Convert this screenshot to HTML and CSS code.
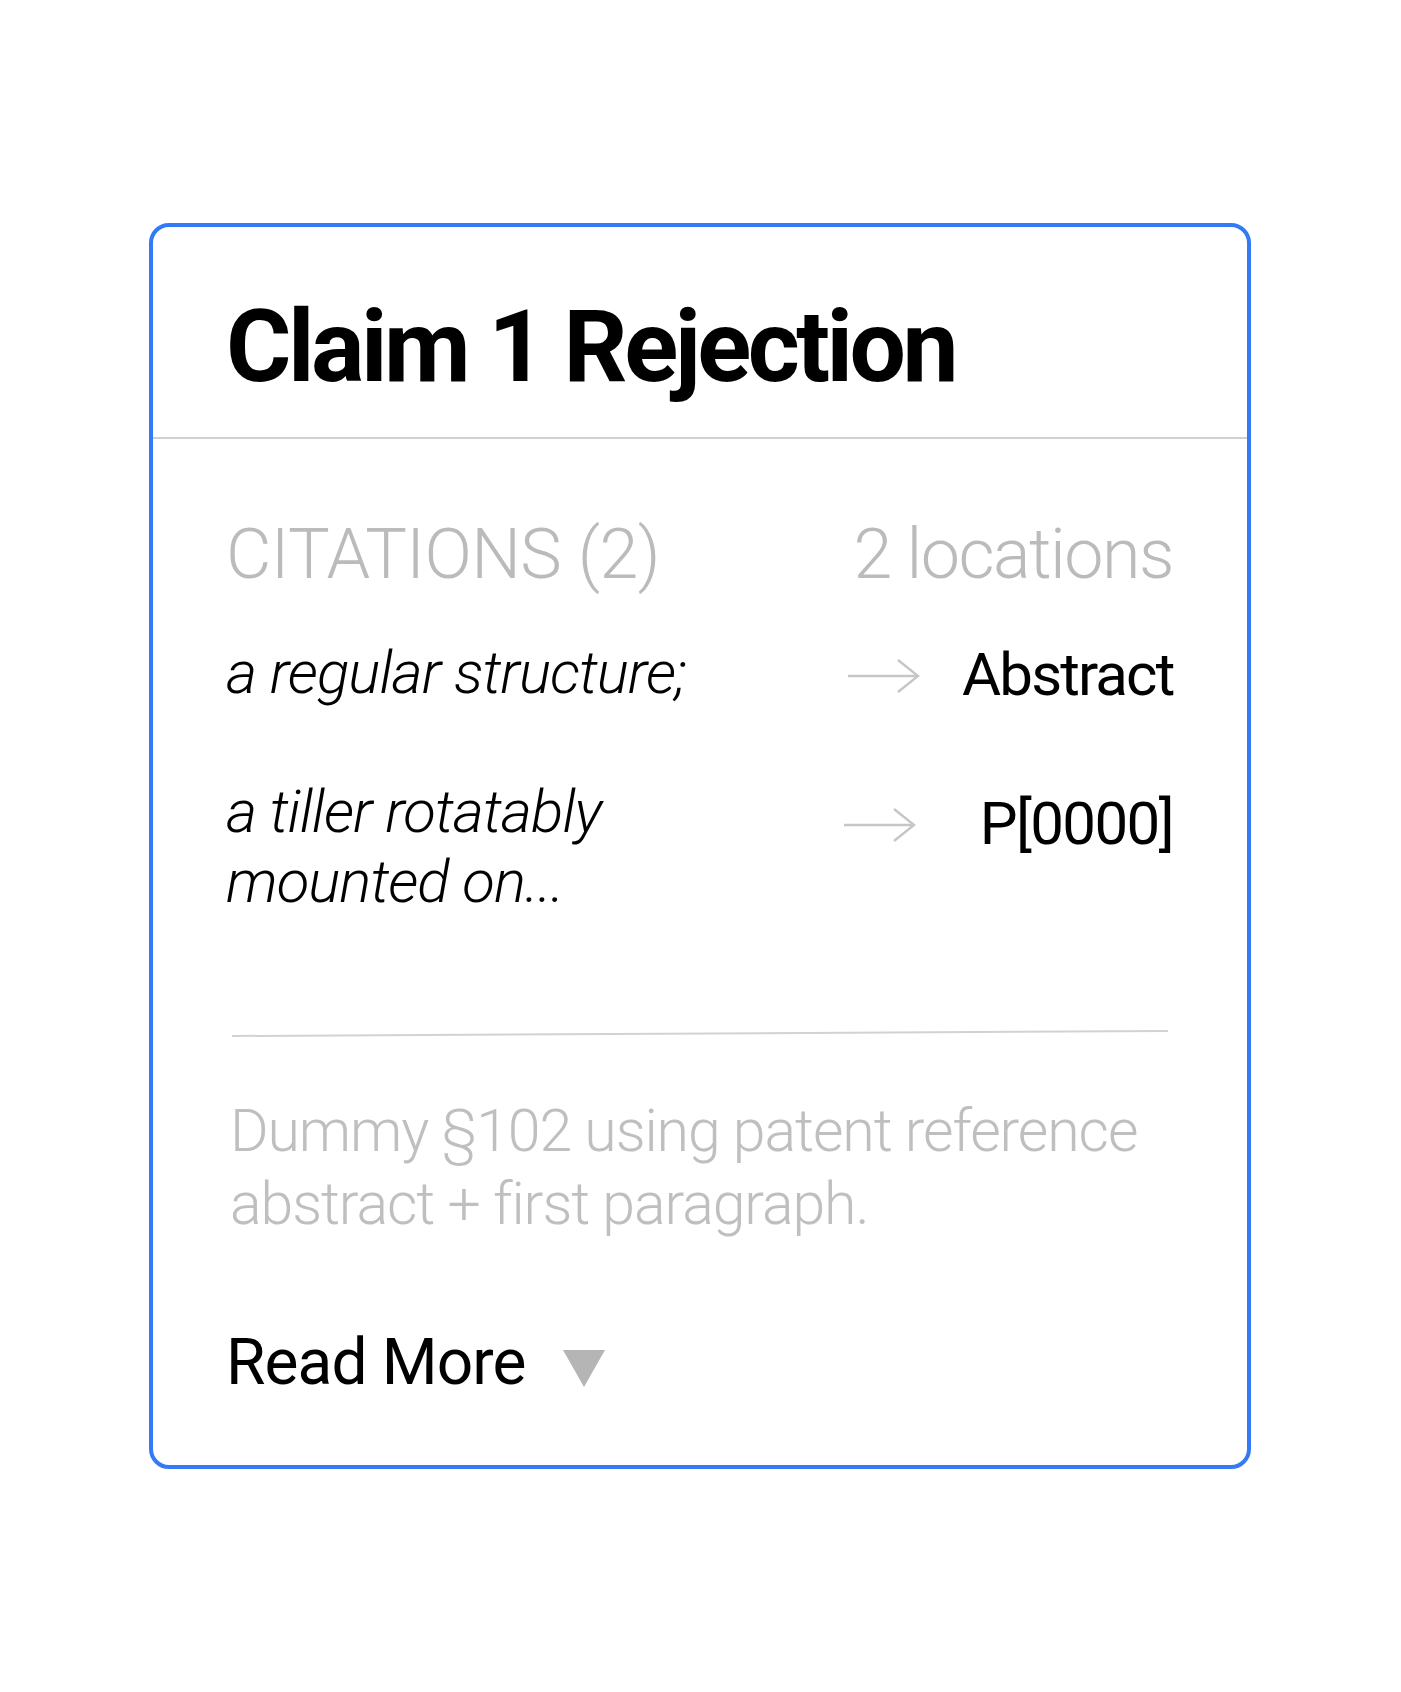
FILE: index.html
```html
<!DOCTYPE html>
<html lang="en">
<head>
<meta charset="utf-8">
<title>Claim 1 Rejection</title>
<link rel="stylesheet" href="styles.css">
</head>
<body>
<div class="card">
  <header class="card-header">
    <h1 class="title">Claim 1 Rejection</h1>
  </header>
  <section class="card-body">
    <div class="cite-head">
      <span class="cite-label">CITATIONS (2)</span>
      <span class="cite-count">2 locations</span>
    </div>
    <div class="cite-row">
      <span class="cite-text">a regular structure;</span>
      <svg class="arrow" viewBox="0 0 72 34" width="72" height="34" aria-hidden="true">
        <line x1="0" y1="17" x2="70" y2="17"/>
        <polyline points="50,1 70,17 50,33"/>
      </svg>
      <span class="loc loc-abstract">Abstract</span>
    </div>
    <div class="cite-row cite-row-tall">
      <span class="cite-text">a tiller rotatably<br>mounted on...</span>
      <svg class="arrow" viewBox="0 0 72 34" width="72" height="34" aria-hidden="true">
        <line x1="0" y1="17" x2="70" y2="17"/>
        <polyline points="50,1 70,17 50,33"/>
      </svg>
      <span class="loc loc-para">P[0000]</span>
    </div>
    <svg class="divider" viewBox="0 0 936 8" width="936" height="8" aria-hidden="true">
      <line x1="0" y1="6" x2="936" y2="1"/>
    </svg>
    <p class="summary">Dummy §102 using patent reference<br>abstract + first paragraph.</p>
    <div class="read-more">
      <span class="read-more-label">Read More</span>
      <span class="read-more-tri"></span>
    </div>
  </section>
</div>
</body>
</html>
```

FILE: styles.css
```css
* {
  box-sizing: border-box;
}

html, body {
  margin: 0;
  padding: 0;
  background: #ffffff;
}

body {
  font-family: Roboto, "Liberation Sans", Arial, sans-serif;
  color: #000;
}

.card {
  width: 1102px;
  margin: 223px 0 0 149px;
  border: 4px solid #3479f6;
  border-radius: 20px;
  background: #fff;
  padding-bottom: 70px;
}

.card-header {
  padding: 70px 72px 40px 73px;
  border-bottom: 2px solid #d0d0d0;
}

.title {
  margin: 0;
  font-size: 100px;
  line-height: 100px;
  font-weight: 700;
  letter-spacing: -3.5px;
  color: #000;
}

.card-body {
  padding: 80px 72px 0 73px;
}

.cite-head {
  display: flex;
  justify-content: space-between;
  font-size: 70px;
  line-height: 70px;
  font-weight: 300;
  color: #bbbbbb;
}

.cite-label {
  letter-spacing: -0.6px;
}

.cite-count {
  letter-spacing: -1.5px;
  padding-right: 2px;
}

.cite-row {
  display: flex;
  align-items: flex-start;
  margin-top: 49px;
  font-size: 60px;
  line-height: 70px;
}

.cite-row-tall {
  margin-top: 67px;
}

.cite-text {
  flex: 1;
  font-style: italic;
  font-weight: 300;
  letter-spacing: -0.95px;
  color: #000;
}

.arrow {
  flex: none;
  margin-top: 21px;
  fill: none;
  stroke: #c6c6c6;
  stroke-width: 2.4;
}

.cite-row-tall .arrow {
  margin-top: 31px;
  margin-right: 4px;
}

.loc {
  flex: none;
  width: 213px;
  margin-left: 42px;
  padding-top: 2px;
  padding-right: 2px;
  text-align: right;
  font-weight: 400;
  color: #000;
}

.loc-abstract {
  letter-spacing: -1.85px;
}

.loc-para {
  padding-top: 12px;
  letter-spacing: -1.6px;
}

.divider {
  display: block;
  margin: 113px 0 0 6px;
  stroke: #d2d2d2;
  stroke-width: 2;
}

.summary {
  margin: 56px 0 0 0;
  padding-left: 4px;
  font-size: 59px;
  line-height: 73px;
  font-weight: 300;
  letter-spacing: -1.1px;
  color: #bfbfbf;
}

.read-more {
  display: flex;
  align-items: flex-start;
  gap: 38px;
  margin-top: 91px;
  font-size: 64px;
  line-height: 64px;
  font-weight: 400;
  color: #000;
}

.read-more-label {
  letter-spacing: -0.9px;
}

.read-more-tri {
  width: 0;
  height: 0;
  margin-top: 19px;
  border-left: 21px solid transparent;
  border-right: 21px solid transparent;
  border-top: 37px solid #b5b5b5;
}
```
